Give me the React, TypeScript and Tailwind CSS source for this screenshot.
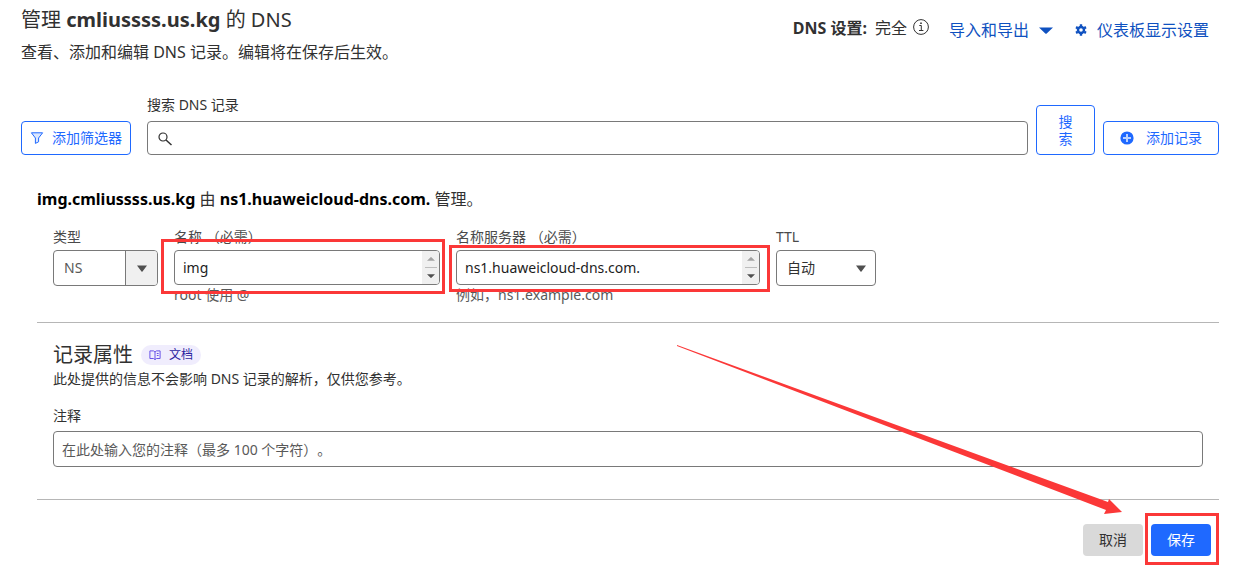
import type { ReactNode } from "react";

type FieldProps = {
  id: string;
  label: string;
  hint?: string;
  className: string;
  children: ReactNode;
};

function Field({ id, label, hint, className, children }: FieldProps) {
  return (
    <div className={className}>
      <label htmlFor={id} className="block h-[23px] text-sm leading-5 text-[#4a4a4a]">
        {label}
      </label>
      {children}
      {hint ? <p className="text-sm leading-5 text-[#595959]">{hint}</p> : null}
    </div>
  );
}

function Caret({ className }: { className?: string }) {
  return (
    <svg viewBox="0 0 12 7" preserveAspectRatio="none" className={className} fill="currentColor" aria-hidden="true">
      <path d="M0 .5h12L6.6 6.500a.8.8 0 0 1-1.2 0z" />
    </svg>
  );
}

/* One-line textarea with its scroll arrows on the right */
function ScrollBox({ id, value, children }: { id: string; value: string; children?: ReactNode }) {
  return (
    <div className="relative h-[35px]">
      <div className="flex h-full overflow-hidden rounded border border-[#797979]">
        <textarea
          id={id}
          rows={1}
          defaultValue={value}
          className="min-w-0 flex-1 resize-none overflow-hidden px-2 py-[7px] text-sm leading-5 text-[#1d1d1d] outline-none"
        />
        <div className="flex w-[17px] flex-col items-center divide-y divide-[#bdbdbd] bg-[#f0f0f0]">
          <button type="button" aria-label="向上" className="flex w-3 flex-1 items-center justify-center text-[#a3a3a3]">
            <Caret className="h-1 w-2 rotate-180" />
          </button>
          <button type="button" aria-label="向下" className="flex w-3 flex-1 items-center justify-center text-[#505050]">
            <Caret className="h-1 w-2" />
          </button>
        </div>
      </div>
      {children}
    </div>
  );
}

export default function App() {
  return (
    <main className="pt-2 pr-[22px] pb-3 pl-[21px] font-['Noto_Sans','Noto_Sans_CJK_SC',sans-serif] text-[#313131] [text-spacing-trim:space-all]">
      {/* Page header */}
      <header className="flex items-start justify-between">
        <div>
          <h1 className="text-xl leading-6">
            管理 <b>cmliussss.us.kg</b> 的 DNS
          </h1>
          <p className="mt-2 text-base leading-6">查看、添加和编辑 DNS 记录。编辑将在保存后生效。</p>
        </div>
        <div className="mt-2 mr-2.5 flex items-center text-base leading-6">
          <span className="mb-1 flex gap-2">
            <b>DNS 设置:</b> 完全
          </span>
          <button type="button" aria-label="DNS 设置信息" className="mb-1.5 ml-1.5">
            <svg viewBox="0 0 16 16" className="size-4" fill="none" stroke="currentColor">
              <circle cx="8" cy="8" r="7.4" />
              <path d="M6.300 6.500h2v5M6 11.500h4.400" />
              <circle cx="8" cy="4.200" r=".5" fill="currentColor" />
            </svg>
          </button>
          <button type="button" className="ml-5 flex items-center gap-2.5 text-[#0f51c0]">
            导入和导出
            <Caret className="h-[7px] w-3.5" />
          </button>
          <a href="#display" className="ml-[22px] flex items-center gap-2.5 text-[#0f51c0]">
            <svg viewBox="0 0 12 12" className="size-3" fill="none" stroke="currentColor">
              <circle cx="6" cy="6" r="3" strokeWidth="2.4" />
              <path
                strokeWidth="2.4"
                d="M6 .2v2M6 9.8v2M1 3.1l1.7 1M9.3 7.9l1.7 1M1 8.9l1.7-1M9.3 4.100l1.700-1"
              />
            </svg>
            仪表板显示设置
          </a>
        </div>
      </header>

      {/* Search row */}
      <form className="mt-[33px] flex items-end">
        <button
          type="button"
          className="flex h-[34px] items-center gap-2 rounded border border-[#1f69ff] px-2 text-sm text-[#1f69ff]"
        >
          <svg viewBox="0 0 14 14" className="size-3.5" fill="#dbe7ff" stroke="currentColor">
            <path d="M1.400 1.800h11.200L8.600 7v3.800l-3.200 1.600V7z" strokeLinejoin="round" />
          </svg>
          添加筛选器
        </button>
        <div className="ml-4 min-w-0 flex-1">
          <label htmlFor="search" className="block h-6 text-sm leading-4">
            搜索 DNS 记录
          </label>
          <div className="flex h-[34px] items-center rounded border border-[#797979] pl-2.5">
            <svg viewBox="0 0 14 14" className="mt-0.5 size-3.5" fill="none" stroke="currentColor">
              <circle cx="5" cy="5" r="4" strokeWidth="1.2" />
              <path d="M8 8l5.500 5" strokeWidth="1.500" />
            </svg>
            <input id="search" type="text" className="min-w-0 flex-1 px-2 text-sm outline-none" />
          </div>
        </div>
        <button
          type="submit"
          className="ml-2 h-[50px] w-[59px] rounded border border-[#1f69ff] px-5 text-sm leading-[17px] text-[#1f69ff]"
        >
          搜索
        </button>
        <button
          type="button"
          className="ml-2 flex h-[34px] items-center gap-3 rounded border border-[#1f69ff] px-4 text-sm text-[#1f69ff]"
        >
          <svg viewBox="0 0 14 14" className="size-3.5">
            <circle cx="7" cy="7" r="6.600" fill="currentColor" />
            <path d="M7 3v8M3 7h8" stroke="#bcd3ff" strokeWidth="2" />
          </svg>
          添加记录
        </button>
      </form>

      {/* Record editor */}
      <form className="mt-8 ml-4">
        <p className="text-base leading-6">
          <b className="text-black">img.cmliussss.us.kg</b> 由{" "}
          <b className="text-black">ns1.huaweicloud-dns.com.</b> 管理。
        </p>

        <div className="mt-4 flex h-[95px] gap-4 px-4">
          <Field id="type" label="类型" className="w-[105px]">
            <div className="relative">
              <select
                id="type"
                disabled
                className="block h-9 w-full appearance-none rounded border border-[#797979] px-2.5 text-sm text-[#595959] opacity-100"
              >
                <option>NS</option>
              </select>
              <span className="pointer-events-none absolute inset-y-px right-px flex w-8 items-center justify-center rounded-r-[3px] border-l border-[#797979] bg-[#f0f0f0]">
                <Caret className="h-[7px] w-2.5 text-[#505050]" />
              </span>
            </div>
          </Field>

          <Field id="name" label="名称 （必需）" hint="root 使用 @" className="w-[266px]">
            <ScrollBox id="name" value="img">
              <span className="pointer-events-none absolute -top-[11px] -right-[5px] -bottom-[9px] -left-[13px] border-3 border-[#fb3838]" />
            </ScrollBox>
          </Field>

          <Field id="server" label="名称服务器 （必需）" hint="例如，ns1.example.com" className="w-[304px]">
            <ScrollBox id="server" value="ns1.huaweicloud-dns.com.">
              <span className="pointer-events-none absolute -top-[5px] -right-[10px] -bottom-[7px] -left-[7px] border-3 border-[#fb3838]" />
            </ScrollBox>
          </Field>

          <Field id="ttl" label="TTL" className="w-[100px]">
            <div className="relative">
              <select
                id="ttl"
                className="block h-9 w-full appearance-none rounded border border-[#797979] px-2.5 text-sm text-[#313131]"
              >
                <option>自动</option>
              </select>
              <Caret className="pointer-events-none absolute top-[15px] right-[10px] h-[7px] w-2.5 text-[#505050]" />
            </div>
          </Field>
        </div>

        {/* Record attributes */}
        <section className="relative border-y border-[#b6b6b6] px-4 pt-5 pb-8">
          <div className="flex h-6 items-center gap-2">
            <h2 className="text-xl leading-6">记录属性</h2>
            <a
              href="#docs"
              className="flex h-5 items-center gap-2 rounded-full bg-[#f0edfd] px-2 text-xs text-[#2b1fa0]"
            >
              <svg viewBox="0 0 12 12" className="size-3" fill="none" stroke="#6a54e8">
                <path d="M.9 1.900h3.600L6 3l1.500-1.100h3.600v7.600H7.500L6 10.600 4.500 9.500H.9zM6 3v7.500M7.800 4.500h1.800M7.800 6.500h1.800" />
              </svg>
              文档
            </a>
          </div>
          <p className="mt-0.5 text-sm leading-5">此处提供的信息不会影响 DNS 记录的解析，仅供您参考。</p>
          <label htmlFor="comment" className="mt-[17px] block h-[25px] text-sm leading-5">
            注释
          </label>
          <input
            id="comment"
            type="text"
            placeholder="在此处输入您的注释（最多 100 个字符）。"
            className="block h-9 w-full rounded border border-[#797979] px-2 text-sm placeholder:text-[#595959]"
          />
          <svg
            viewBox="0 0 445 169"
            className="pointer-events-none absolute top-[22px] right-[97px] h-[169px] w-[445px]"
            fill="#fb3838"
            aria-hidden="true"
          >
            <path d="M0 0L431 157L432 154L445 167L427 169L429 165L0 1z" />
          </svg>
        </section>

        <div className="mt-6 flex justify-end gap-2 pr-2">
          <button type="button" className="h-8 w-[60px] rounded bg-[#d9d9d9] text-sm">
            取消
          </button>
          <div className="relative h-8">
            <button type="submit" className="h-8 w-[60px] rounded bg-[#1f69ff] text-sm text-white">
              保存
            </button>
            <span className="pointer-events-none absolute -top-[11px] -right-2 -bottom-[9px] -left-1.5 border-3 border-[#fb3838]" />
          </div>
        </div>
      </form>
    </main>
  );
}
